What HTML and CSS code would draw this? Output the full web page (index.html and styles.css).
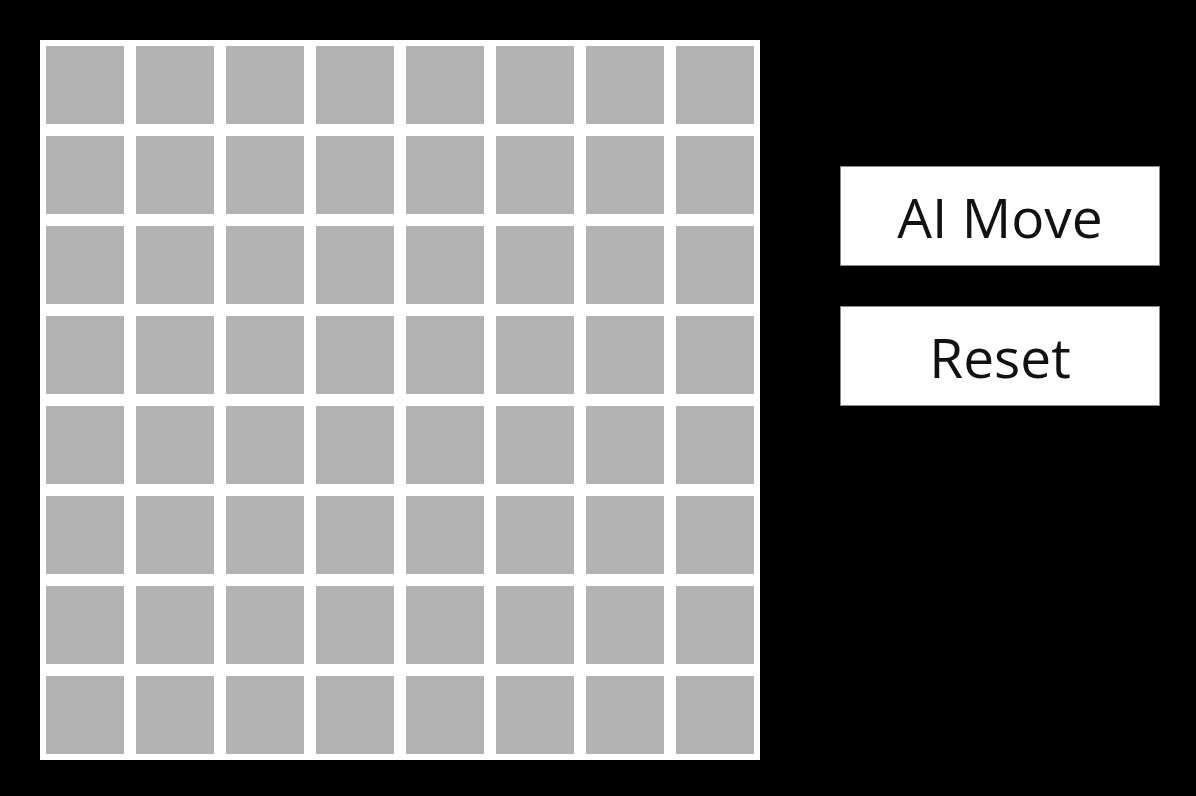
FILE: index.html
```html
<!DOCTYPE html>
<html>

<head>
	<title>Board</title>

	<link rel="stylesheet" href="styles.css">
</head>

<body>

	<main class="game">
		<div id="board" class="board"></div>

		<div class="controls">
			<button id="ai_move" class="button" type="button">AI Move</button>
			<button id="reset" class="button" type="button">Reset</button>
		</div>
	</main>

	<script type="text/javascript">
	var board = document.getElementById("board");
	for (var i = 0; i < 64; i++) {
		var cell = document.createElement("div");
		cell.className = "cell";
		board.appendChild(cell);
	}
	</script>
</body>

</html>
```

FILE: styles.css
```css
body {
	background: black;
	margin: 0px;
	height: 100vh;
	font-family: "Open Sans", "Noto Sans", sans-serif;
}

.game {
	display: flex;
	padding: 40px;
	gap: 80px;
}

.board {
	display: grid;
	grid-template-columns: repeat(8, 90px);
	grid-template-rows: repeat(8, 90px);
	background: white;
	width: 720px;
	height: 720px;
}

.cell {
	background: #b3b3b3;
	margin: 6px;
}

.controls {
	display: flex;
	flex-direction: column;
	gap: 40px;
	padding-top: 126px;
}

.button {
	width: 320px;
	height: 100px;
	background: white;
	border: 1px solid #888;
	font-family: "Open Sans", "Noto Sans", sans-serif;
	font-size: 55px;
	color: #111;
	padding: 0px;
	text-align: center;
}
```
